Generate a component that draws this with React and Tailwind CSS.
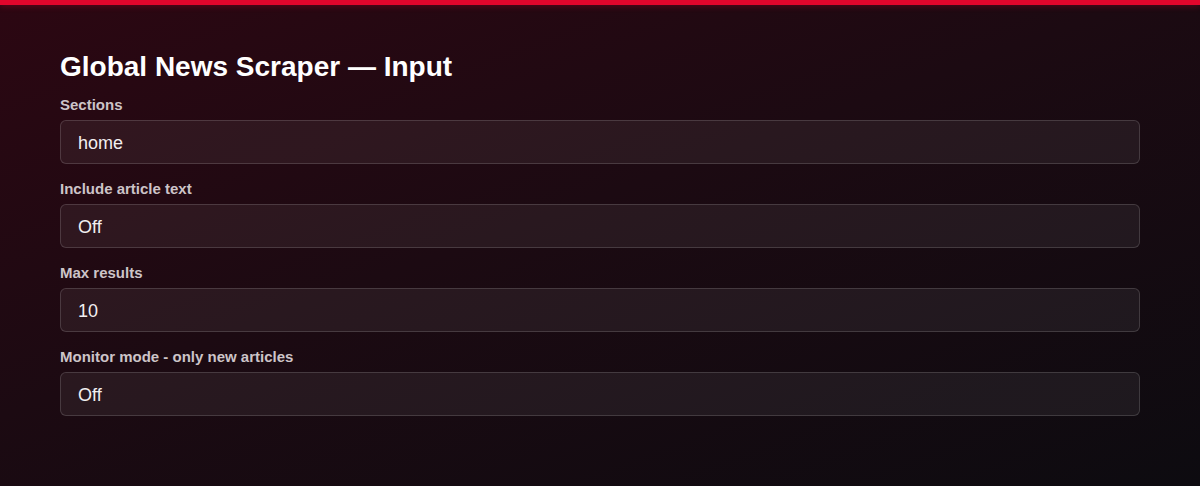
import React from "react";

const fields = [
  { label: "Sections", value: "home" },
  { label: "Include article text", value: "Off" },
  { label: "Max results", value: "10" },
  { label: "Monitor mode - only new articles", value: "Off" },
];

export default function App() {
  return (
    <div
      className="w-[1200px] h-[486px] overflow-hidden flex flex-col bg-[linear-gradient(160deg,#2c0712_0%,#1c0a12_45%,#0d0b10_100%)]"
      style={{ fontFamily: '"Liberation Sans", Arial, Helvetica, sans-serif' }}
    >
      <div className="h-[5px] w-full bg-[#e1062c] shrink-0 shadow-[0_1px_6px_rgba(225,6,44,0.35)]" />
      <div className="px-[60px] pt-[46px] flex flex-col">
        <h1 className="text-[28px] leading-[32px] font-bold text-white mb-[13px]">
          Global News Scraper — Input
        </h1>
        {fields.map((f) => (
          <div key={f.label} className="flex flex-col mb-4">
            <label className="text-[15px] leading-[17px] font-bold text-[#cdc4c8] mb-[7px]">
              {f.label}
            </label>
            <div className="h-[44px] rounded-[6px] border border-white/15 bg-white/[0.06] flex items-center px-[17px] pt-[2px] text-[18px] text-[#f2eff1]">
              {f.value}
            </div>
          </div>
        ))}
      </div>
    </div>
  );
}
